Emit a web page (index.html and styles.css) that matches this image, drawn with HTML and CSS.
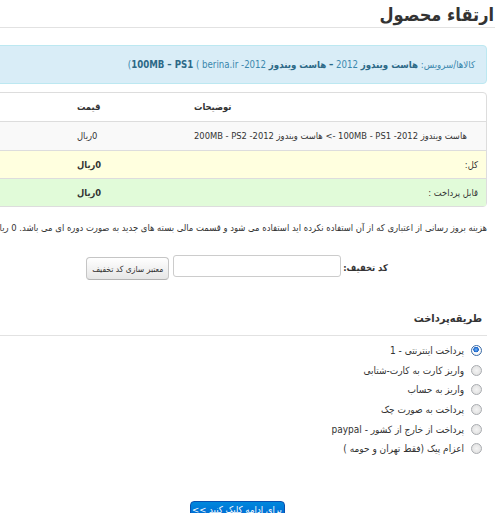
FILE: index.html
```html
<!DOCTYPE html>
<html lang="fa" dir="rtl">
<head>
<meta charset="utf-8">
<title>ارتقاء محصول</title>
<link rel="stylesheet" href="styles.css">
</head>
<body>
<div class="page-header"><h1>ارتقاء محصول</h1></div>
<div class="content">
  <div class="alert">
    <span class="iso">کالاها/سرویس:</span>
    <b class="iso">هاست ویندوز</b>
    <span class="iso" dir="ltr">2012</span>
    <b class="iso">–</b>
    <b class="iso">هاست ویندوز</b>
    <span class="iso" dir="ltr">-2012</span>
    <span class="iso" dir="ltr">berina.ir</span>
    <span class="iso" dir="ltr">(</span>
    <b class="iso" dir="ltr">100MB – PS1</b><span class="iso" dir="ltr">(</span>
  </div>

  <table class="cart">
    <thead>
      <tr><th class="col-desc">توضیحات</th><th class="col-price">قیمت</th><th class="col-rest"></th></tr>
    </thead>
    <tbody>
      <tr class="striped">
        <td class="col-desc">هاست ویندوز 2012- 100MB - PS1 -&gt; هاست ویندوز 2012- 200MB - PS2</td>
        <td class="col-price">0ریال</td>
        <td></td>
      </tr>
      <tr class="total">
        <td class="label">کل:</td>
        <td class="col-price"><b>0ریال</b></td>
        <td></td>
      </tr>
      <tr class="payable">
        <td class="label">قابل پرداخت :</td>
        <td class="col-price"><b>0ریال</b></td>
        <td></td>
      </tr>
    </tbody>
  </table>

  <p class="note">هزینه بروز رسانی از اعتباری که از آن استفاده نکرده اید استفاده می شود و قسمت مالی بسته های جدید به صورت دوره ای می باشد. 0 ریال</p>

  <form class="promo">
    <label class="promo-label" for="promocode">کد تخفیف:</label>
    <input class="promo-input" id="promocode" type="text">
    <button class="btn" type="button">معتبر سازی کد تخفیف</button>
  </form>

  <h2 class="section-title">طریقه‌پرداخت</h2>

  <ul class="gateways">
    <li><span class="radio checked"></span><span>پرداخت اینترنتی - 1</span></li>
    <li><span class="radio"></span><span>واریز کارت به کارت-شتابی</span></li>
    <li><span class="radio"></span><span>واریز به حساب</span></li>
    <li><span class="radio"></span><span>پرداخت به صورت چک</span></li>
    <li><span class="radio"></span><span>پرداخت از خارج از کشور - paypal</span></li>
    <li><span class="radio"></span><span>اعزام پیک (فقط تهران و حومه )</span></li>
  </ul>

  <div class="actions">
    <button class="btn-primary" type="button">برای ادامه کلیک کنید &gt;&gt;</button>
  </div>
</div>
</body>
</html>
```

FILE: styles.css
```css
html, body {
  margin: 0;
  padding: 0;
  overflow-x: hidden;
}
body {
  direction: rtl;
  font-family: "DejaVu Sans Condensed", "DejaVu Sans", sans-serif;
  font-stretch: condensed;
  font-size: 9.3px;
  color: #333;
  background: #fff;
}
.page-header {
  height: 27px;
  border-bottom: 1px solid #e2e2e2;
  padding-right: 1px;
}
.page-header h1 {
  margin: 0;
  font-size: 18px;
  line-height: 30px;
  font-weight: bold;
  color: #333;
}
.content {
  width: 500px;
  margin-right: 8px;
}
.alert {
  margin-top: 17px;
  height: 37px;
  line-height: 37px;
  padding: 0 11px;
  border: 1px solid #bce8f1;
  border-radius: 4px;
  background: #d9edf7;
  color: #3a87ad;
  font-size: 9.6px;
  white-space: nowrap;
}
.alert b { color: #2d6987; }
.iso { unicode-bidi: isolate; }

.cart {
  margin-top: 8px;
  width: 100%;
  border: 1px solid #ddd;
  border-radius: 4px;
  border-collapse: separate;
  border-spacing: 0;
}
.cart th, .cart td {
  text-align: left;
  padding: 8px;
  line-height: 12px;
  border-top: 1px solid #ddd;
  white-space: nowrap;
}
.cart thead th { border-top: 0; font-weight: bold; }
.cart .col-desc { width: 284px; }
.cart .col-price { width: 101px; }
.cart tr.striped td { background: #f9f9f9; }
.cart tr.total td { background: #ffffdf; line-height: 11px; }
.cart tr.payable td { background: #e1fbd9; line-height: 11px; }
.cart td.label { text-align: right; }

.note {
  margin: 14px 0 0;
  line-height: 14px;
  font-size: 9.4px;
  white-space: nowrap;
}

.promo {
  margin: 19px 0 0;
  display: flex;
  align-items: center;
  justify-content: center;
}
.promo-label { font-weight: bold; margin-left: 2px; }
.promo-input {
  box-sizing: border-box;
  width: 168px;
  height: 22px;
  padding: 0 4px;
  border: 1px solid #ccc;
  border-radius: 3px;
  margin: 0 0 3px 4px;
}
.btn {
  margin-top: 3px;
  width: 83px;
  height: 23px;
  padding: 0;
  font-family: inherit;
  font-size: 8.5px;
  white-space: nowrap;
  color: #333;
  border: 1px solid #c5c5c5;
  border-bottom-color: #b3b3b3;
  border-radius: 4px;
  background: linear-gradient(#ffffff, #e6e6e6);
}

.section-title {
  margin: 25px 0 0;
  padding-right: 5px;
  height: 30px;
  line-height: 28px;
  font-size: 11px;
  font-weight: bold;
  border-bottom: 1px solid #e2e2e2;
  color: #333;
}

.gateways {
  list-style: none;
  margin: 5px 0 0;
  padding: 0 5px 0 0;
  font-size: 10px;
}
.gateways li {
  display: flex;
  align-items: center;
  gap: 7px;
  height: 19.6px;
}
.radio {
  width: 11px;
  height: 11px;
  box-sizing: border-box;
  border-radius: 50%;
  border: 1px solid #a9acb0;
  background: radial-gradient(circle at 50% 50%, #f4f4f4, #dcdcdc);
  flex: none;
}
.radio.checked {
  background: radial-gradient(circle at 45% 40%, #6bb3ff 0, #1a63c6 2.5px, #ffffff 3px, #e2e2e2 100%);
  border-color: #3b6ca8;
}

.actions {
  margin-top: 42px;
  display: flex;
  justify-content: center;
}
.btn-primary {
  width: 95px;
  padding: 2px 0 9px;
  line-height: 12px;
  font-family: inherit;
  font-size: 9.5px;
  white-space: nowrap;
  color: #fff;
  border: 1px solid #0a4fae;
  border-radius: 4px;
  background: linear-gradient(#0088dd, #0055cc);
}
```
